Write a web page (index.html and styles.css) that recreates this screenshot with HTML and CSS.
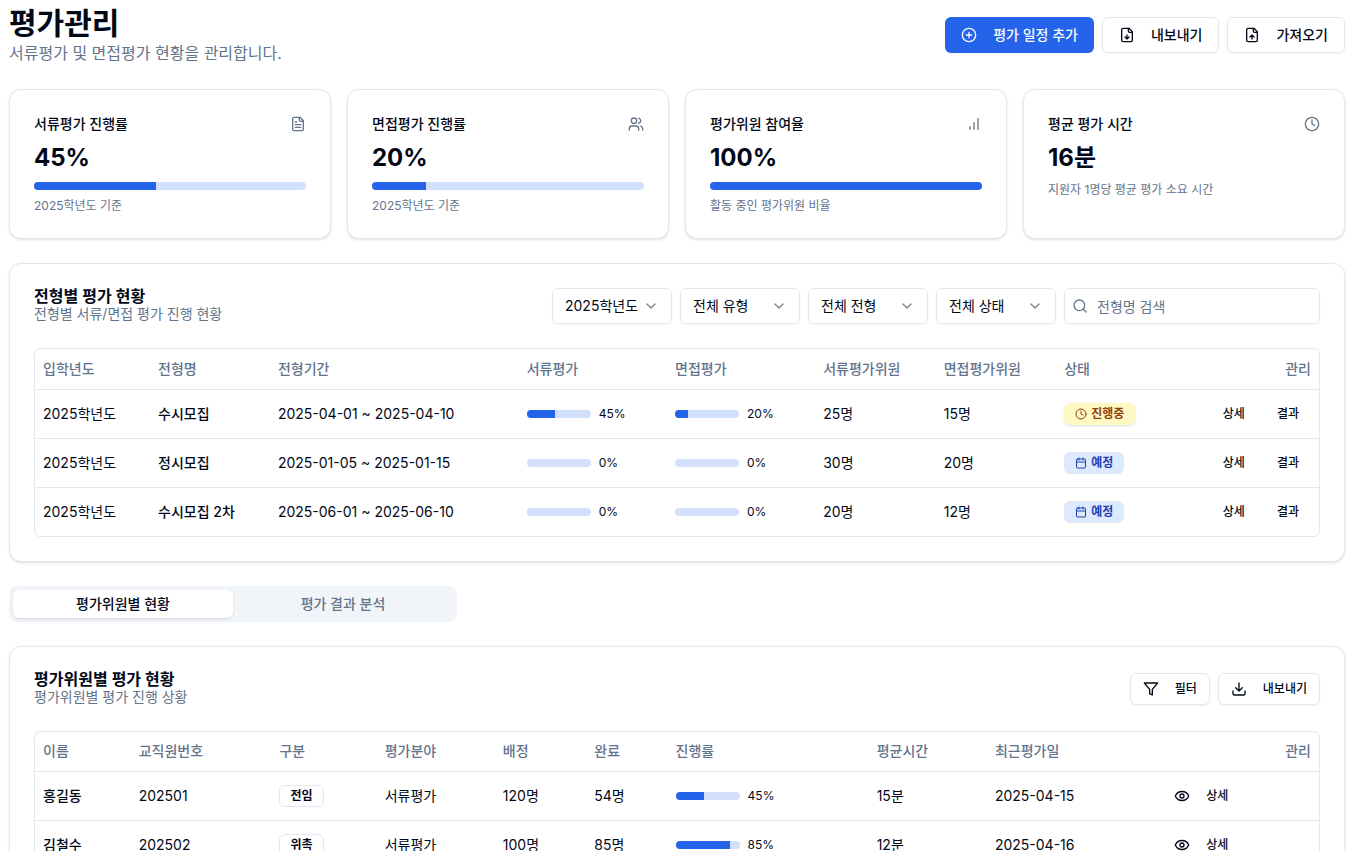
FILE: index.html
```html
<!DOCTYPE html>
<html lang="ko">
<head>
    <meta charset="UTF-8">
    <meta name="viewport" content="width=device-width, initial-scale=1.0">
    <title>평가관리</title>
    <link rel="stylesheet" href="styles.css">
</head>
<body>
    <!-- Shared icons -->
    <svg class="sprite" aria-hidden="true">
        <symbol id="plus-circle" viewBox="0 0 24 24"><circle cx="12" cy="12" r="10"/><path d="M8 12h8M12 8v8"/></symbol>
        <symbol id="file-down" viewBox="0 0 24 24"><path d="M15 2H6a2 2 0 0 0-2 2v16a2 2 0 0 0 2 2h12a2 2 0 0 0 2-2V7Z"/><path d="M14 2v4a2 2 0 0 0 2 2h4M12 18v-6M9 15l3 3 3-3"/></symbol>
        <symbol id="file-up" viewBox="0 0 24 24"><path d="M15 2H6a2 2 0 0 0-2 2v16a2 2 0 0 0 2 2h12a2 2 0 0 0 2-2V7Z"/><path d="M14 2v4a2 2 0 0 0 2 2h4M12 12v6M15 15l-3-3-3 3"/></symbol>
        <symbol id="file-text" viewBox="0 0 24 24"><path d="M15 2H6a2 2 0 0 0-2 2v16a2 2 0 0 0 2 2h12a2 2 0 0 0 2-2V7Z"/><path d="M14 2v4a2 2 0 0 0 2 2h4M10 9H8M16 13H8M16 17H8"/></symbol>
        <symbol id="users" viewBox="0 0 24 24"><path d="M16 21v-2a4 4 0 0 0-4-4H6a4 4 0 0 0-4 4v2"/><circle cx="9" cy="7" r="4"/><path d="M22 21v-2a4 4 0 0 0-3-3.87M16 3.13a4 4 0 0 1 0 7.75"/></symbol>
        <symbol id="bar-chart" viewBox="0 0 24 24"><path d="M12 20V10M18 20V4M6 20v-4"/></symbol>
        <symbol id="clock" viewBox="0 0 24 24"><circle cx="12" cy="12" r="10"/><path d="M12 6v6l4 2"/></symbol>
        <symbol id="calendar" viewBox="0 0 24 24"><path d="M8 2v4M16 2v4"/><rect width="18" height="18" x="3" y="4" rx="2"/><path d="M3 10h18"/></symbol>
        <symbol id="chevron-down" viewBox="0 0 24 24"><path d="m6 9 6 6 6-6"/></symbol>
        <symbol id="search" viewBox="0 0 24 24"><circle cx="11" cy="11" r="8"/><path d="m21 21-4.3-4.3"/></symbol>
        <symbol id="filter" viewBox="0 0 24 24"><path d="M22 3H2l8 9.46V19l4 2v-8.54L22 3z"/></symbol>
        <symbol id="download" viewBox="0 0 24 24"><path d="M21 15v4a2 2 0 0 1-2 2H5a2 2 0 0 1-2-2v-4M7 10l5 5 5-5M12 15V3"/></symbol>
        <symbol id="eye" viewBox="0 0 24 24"><path d="M2 12a10.75 10.75 0 0 1 20 0 10.75 10.75 0 0 1-20 0"/><circle cx="12" cy="12" r="3"/></symbol>
    </svg>

    <main class="page">
        <header class="page-header">
            <div>
                <h1>평가관리</h1>
                <p class="page-desc">서류평가 및 면접평가 현황을 관리합니다.</p>
            </div>
            <div class="actions">
                <button class="btn btn-primary"><svg class="icon"><use href="#plus-circle"/></svg>평가 일정 추가</button>
                <button class="btn"><svg class="icon"><use href="#file-down"/></svg>내보내기</button>
                <button class="btn"><svg class="icon"><use href="#file-up"/></svg>가져오기</button>
            </div>
        </header>

        <!-- Summary cards -->
        <section class="stats">
            <div class="card">
                <div class="stat-head"><h2>서류평가 진행률</h2><svg class="icon"><use href="#file-text"/></svg></div>
                <div class="stat-value">45%</div>
                <div class="progress"><div class="bar" style="width: 45%"></div></div>
                <p class="stat-note">2025학년도 기준</p>
            </div>
            <div class="card">
                <div class="stat-head"><h2>면접평가 진행률</h2><svg class="icon"><use href="#users"/></svg></div>
                <div class="stat-value">20%</div>
                <div class="progress"><div class="bar" style="width: 20%"></div></div>
                <p class="stat-note">2025학년도 기준</p>
            </div>
            <div class="card">
                <div class="stat-head"><h2>평가위원 참여율</h2><svg class="icon"><use href="#bar-chart"/></svg></div>
                <div class="stat-value">100%</div>
                <div class="progress"><div class="bar" style="width: 100%"></div></div>
                <p class="stat-note">활동 중인 평가위원 비율</p>
            </div>
            <div class="card">
                <div class="stat-head"><h2>평균 평가 시간</h2><svg class="icon"><use href="#clock"/></svg></div>
                <div class="stat-value">16분</div>
                <p class="stat-note">지원자 1명당 평균 평가 소요 시간</p>
            </div>
        </section>

        <!-- Status by admission type -->
        <section class="card">
            <div class="card-header">
                <div>
                    <h2 class="card-title">전형별 평가 현황</h2>
                    <p class="card-desc">전형별 서류/면접 평가 진행 현황</p>
                </div>
                <div class="actions">
                    <div class="select">
                        <select aria-label="입학년도"><option>2025학년도</option></select>
                        <svg class="icon"><use href="#chevron-down"/></svg>
                    </div>
                    <div class="select">
                        <select aria-label="유형"><option>전체 유형</option></select>
                        <svg class="icon"><use href="#chevron-down"/></svg>
                    </div>
                    <div class="select">
                        <select aria-label="전형"><option>전체 전형</option></select>
                        <svg class="icon"><use href="#chevron-down"/></svg>
                    </div>
                    <div class="select">
                        <select aria-label="상태"><option>전체 상태</option></select>
                        <svg class="icon"><use href="#chevron-down"/></svg>
                    </div>
                    <div class="search">
                        <svg class="icon"><use href="#search"/></svg>
                        <input type="search" placeholder="전형명 검색" aria-label="전형명 검색">
                    </div>
                </div>
            </div>
            <div class="table-box">
                <table>
                    <thead>
                        <tr>
                            <th>입학년도</th>
                            <th>전형명</th>
                            <th>전형기간</th>
                            <th>서류평가</th>
                            <th>면접평가</th>
                            <th>서류평가위원</th>
                            <th>면접평가위원</th>
                            <th>상태</th>
                            <th class="manage">관리</th>
                        </tr>
                    </thead>
                    <tbody>
                        <tr>
                            <td>2025학년도</td>
                            <td class="strong">수시모집</td>
                            <td>2025-04-01 ~ 2025-04-10</td>
                            <td><div class="rate"><div class="progress"><div class="bar" style="width: 45%"></div></div>45%</div></td>
                            <td><div class="rate"><div class="progress"><div class="bar" style="width: 20%"></div></div>20%</div></td>
                            <td>25명</td>
                            <td>15명</td>
                            <td><span class="badge badge-active"><svg class="icon"><use href="#clock"/></svg>진행중</span></td>
                            <td><div class="row-actions"><button class="btn-ghost">상세</button><button class="btn-ghost">결과</button></div></td>
                        </tr>
                        <tr>
                            <td>2025학년도</td>
                            <td class="strong">정시모집</td>
                            <td>2025-01-05 ~ 2025-01-15</td>
                            <td><div class="rate"><div class="progress"></div>0%</div></td>
                            <td><div class="rate"><div class="progress"></div>0%</div></td>
                            <td>30명</td>
                            <td>20명</td>
                            <td><span class="badge badge-planned"><svg class="icon"><use href="#calendar"/></svg>예정</span></td>
                            <td><div class="row-actions"><button class="btn-ghost">상세</button><button class="btn-ghost">결과</button></div></td>
                        </tr>
                        <tr>
                            <td>2025학년도</td>
                            <td class="strong">수시모집 2차</td>
                            <td>2025-06-01 ~ 2025-06-10</td>
                            <td><div class="rate"><div class="progress"></div>0%</div></td>
                            <td><div class="rate"><div class="progress"></div>0%</div></td>
                            <td>20명</td>
                            <td>12명</td>
                            <td><span class="badge badge-planned"><svg class="icon"><use href="#calendar"/></svg>예정</span></td>
                            <td><div class="row-actions"><button class="btn-ghost">상세</button><button class="btn-ghost">결과</button></div></td>
                        </tr>
                    </tbody>
                </table>
            </div>
        </section>

        <div class="tabs" role="tablist">
            <button class="tab active" role="tab" aria-selected="true">평가위원별 현황</button>
            <button class="tab" role="tab" aria-selected="false">평가 결과 분석</button>
        </div>

        <!-- Status by evaluator -->
        <section class="card">
            <div class="card-header">
                <div>
                    <h2 class="card-title">평가위원별 평가 현황</h2>
                    <p class="card-desc">평가위원별 평가 진행 상황</p>
                </div>
                <div class="actions">
                    <button class="btn btn-sm"><svg class="icon"><use href="#filter"/></svg>필터</button>
                    <button class="btn btn-sm"><svg class="icon"><use href="#download"/></svg>내보내기</button>
                </div>
            </div>
            <div class="table-box">
                <table class="evaluators">
                    <thead>
                        <tr>
                            <th>이름</th>
                            <th>교직원번호</th>
                            <th>구분</th>
                            <th>평가분야</th>
                            <th>배정</th>
                            <th>완료</th>
                            <th>진행률</th>
                            <th>평균시간</th>
                            <th>최근평가일</th>
                            <th class="manage">관리</th>
                        </tr>
                    </thead>
                    <tbody>
                        <tr>
                            <td class="strong">홍길동</td>
                            <td>202501</td>
                            <td><span class="badge">전임</span></td>
                            <td>서류평가</td>
                            <td>120명</td>
                            <td>54명</td>
                            <td><div class="rate"><div class="progress"><div class="bar" style="width: 45%"></div></div>45%</div></td>
                            <td>15분</td>
                            <td>2025-04-15</td>
                            <td><button class="btn-ghost"><svg class="icon"><use href="#eye"/></svg>상세</button></td>
                        </tr>
                        <tr>
                            <td class="strong">김철수</td>
                            <td>202502</td>
                            <td><span class="badge">위촉</span></td>
                            <td>서류평가</td>
                            <td>100명</td>
                            <td>85명</td>
                            <td><div class="rate"><div class="progress"><div class="bar" style="width: 85%"></div></div>85%</div></td>
                            <td>12분</td>
                            <td>2025-04-16</td>
                            <td><button class="btn-ghost"><svg class="icon"><use href="#eye"/></svg>상세</button></td>
                        </tr>
                    </tbody>
                </table>
            </div>
        </section>
    </main>
</body>
</html>
```
FILE: styles.css
```css
/* General reset */
* {
    margin: 0;
    padding: 0;
    box-sizing: border-box;
}

body {
    font-family: Inter, "Noto Sans CJK KR", sans-serif;
    font-size: 14px;
    line-height: 20px;
    color: #020817;
    background: #fff;
}

button, input, select {
    font: inherit;
    color: inherit;
}

.sprite {
    display: none;
}

.icon {
    width: 16px;
    height: 16px;
    flex-shrink: 0;
    fill: none;
    stroke: currentColor;
    stroke-width: 2;
    stroke-linecap: round;
    stroke-linejoin: round;
}

/* Page layout */
.page {
    display: flex;
    flex-direction: column;
    gap: 24px;
    padding: 5px 4px 24px 9px;
}

.page-header {
    display: flex;
    align-items: center;
    justify-content: space-between;
}

h1 {
    font-size: 30px;
    line-height: 36px;
    font-weight: 700;
}

.page-desc {
    font-size: 16px;
    line-height: 24px;
    color: #64748b;
}

.actions {
    display: flex;
    align-items: center;
    gap: 8px;
}

/* Buttons */
.btn {
    display: inline-flex;
    align-items: center;
    gap: 16px;
    height: 36px;
    padding: 0 16px;
    font-weight: 500;
    white-space: nowrap;
    background: #fff;
    border: 1px solid #e2e8f0;
    border-radius: 6px;
    box-shadow: 0 1px 2px rgba(0, 0, 0, 0.05);
    cursor: pointer;
}

.btn-primary {
    color: #f8fafc;
    background: #2563eb;
    border: none;
}

.btn-sm {
    height: 32px;
    padding: 0 12px;
    font-size: 12px;
}

.btn-ghost {
    display: inline-flex;
    align-items: center;
    gap: 16px;
    height: 32px;
    padding: 0 12px;
    font-size: 12px;
    font-weight: 500;
    vertical-align: middle;
    background: none;
    border: none;
    border-radius: 6px;
    cursor: pointer;
}

.btn-ghost:hover {
    background: #f1f5f9;
}

/* Cards */
.card {
    padding: 24px;
    background: #fff;
    border: 1px solid #e2e8f0;
    border-radius: 12px;
    box-shadow: 0 1px 3px rgba(0, 0, 0, 0.1), 0 1px 2px -1px rgba(0, 0, 0, 0.1);
}

.stats {
    display: grid;
    grid-template-columns: repeat(4, 1fr);
    gap: 16px;
}

.stat-head {
    display: flex;
    align-items: center;
    justify-content: space-between;
    margin-bottom: 8px;
}

.stat-head h2 {
    font-size: 14px;
    font-weight: 500;
}

.stat-head .icon {
    color: #64748b;
}

.stat-value {
    font-size: 24px;
    line-height: 32px;
    font-weight: 700;
    margin-bottom: 8px;
}

.stat-note {
    font-size: 12px;
    line-height: 16px;
    color: #64748b;
}

.progress {
    height: 8px;
    background: #d3e0fb;
    border-radius: 4px;
    overflow: hidden;
}

.progress + .stat-note {
    margin-top: 8px;
}

.bar {
    height: 100%;
    background: #2563eb;
}

.card-header {
    display: flex;
    align-items: center;
    justify-content: space-between;
    margin-bottom: 24px;
}

.card-title {
    font-size: 16px;
    line-height: 16px;
    font-weight: 600;
}

.card-desc {
    color: #64748b;
}

/* Filters */
.select, .search {
    position: relative;
}

.select select, .search input {
    display: block;
    height: 36px;
    padding: 0 12px;
    background: transparent;
    border: 1px solid #e2e8f0;
    border-radius: 6px;
    box-shadow: 0 1px 2px rgba(0, 0, 0, 0.05);
    appearance: none;
}

.select select {
    width: 120px;
}

.select .icon {
    position: absolute;
    right: 13px;
    top: 10px;
    opacity: 0.5;
    pointer-events: none;
}

.search input {
    width: 256px;
    padding-left: 32px;
}

.search input::placeholder {
    color: #64748b;
}

.search .icon {
    position: absolute;
    left: 8px;
    top: 10px;
    color: #64748b;
}

/* Tables */
.table-box {
    border: 1px solid #e2e8f0;
    border-radius: 6px;
    overflow: hidden;
}

table {
    width: 100%;
    border-spacing: 0;
    white-space: nowrap;
}

th, td {
    padding: 0 8px;
    text-align: left;
    vertical-align: middle;
    border-bottom: 1px solid #e2e8f0;
}

th {
    height: 41px;
    padding-bottom: 1px;
    font-weight: 500;
    color: #64748b;
}

.evaluators th {
    height: 40px;
}

td {
    height: 49px;
}

tbody tr:last-child td {
    height: 48px;
    border-bottom: none;
}

.strong {
    font-weight: 500;
}

th.manage {
    text-align: right;
}

.rate {
    display: flex;
    align-items: center;
    gap: 8px;
    font-size: 12px;
    line-height: 16px;
}

.rate .progress {
    width: 64px;
}

.row-actions {
    display: flex;
    justify-content: flex-end;
    gap: 8px;
}

/* Badges */
.badge {
    display: inline-flex;
    align-items: center;
    gap: 4px;
    padding: 2px 10px;
    font-size: 12px;
    line-height: 16px;
    font-weight: 600;
    vertical-align: middle;
    border: 1px solid #e2e8f0;
    border-radius: 6px;
}

.badge .icon {
    width: 12px;
    height: 12px;
}

.badge-active {
    color: #92400e;
    background: #fef9c3;
    border-color: transparent;
    box-shadow: 0 1px 3px rgba(0, 0, 0, 0.1), 0 1px 2px -1px rgba(0, 0, 0, 0.1);
}

.badge-planned {
    color: #1e40af;
    background: #dbeafe;
}

/* Tabs */
.tabs {
    display: grid;
    grid-template-columns: 1fr 1fr;
    width: 448px;
    height: 36px;
    padding: 4px;
    background: #f1f5f9;
    border-radius: 8px;
}

.tab {
    font-weight: 500;
    color: #64748b;
    background: none;
    border: none;
    border-radius: 6px;
    cursor: pointer;
}

.tab.active {
    color: #020817;
    background: #fff;
    box-shadow: 0 1px 3px rgba(0, 0, 0, 0.1), 0 1px 2px -1px rgba(0, 0, 0, 0.1);
}
```
